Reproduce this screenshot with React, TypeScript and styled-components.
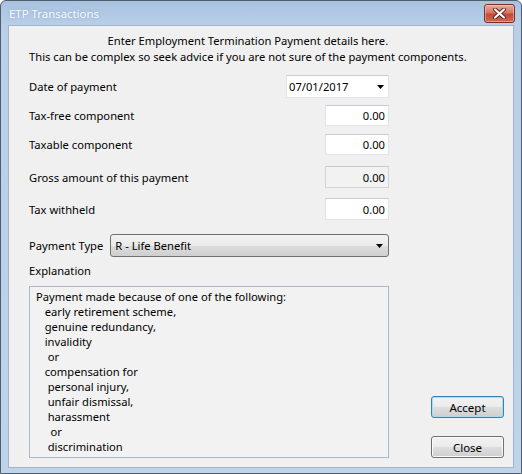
import React from 'react';
import styled, { createGlobalStyle } from 'styled-components';

const Global = createGlobalStyle`
  html, body { margin: 0; padding: 0; background: #ffffff; }
  body { font-family: "Noto Sans", "Open Sans", sans-serif; font-size: 11.2px; color: #000; }
  * { box-sizing: border-box; }
`;

const Window = styled.div`
  width: 522px;
  height: 474px;
  display: flex;
  flex-direction: column;
  border: 1px solid #4f5d6c;
  border-radius: 6px 6px 0 0;
  background: linear-gradient(#a8c2e0 0, #b9cfe8 24px, #bfd3ea 100%);
  padding: 0 7px 5px 7px;
`;

const TitleBar = styled.div`
  height: 24px;
  display: flex;
  align-items: flex-start;
  justify-content: space-between;
`;

const Title = styled.div`
  margin: 5px 0 0 1px;
  font-size: 11.4px;
  line-height: 15px;
  color: #f7faff;
  text-shadow: 0 0 3px rgba(120, 150, 190, 0.6);
`;

const CloseButton = styled.div`
  margin: 3px -1px 0 0;
  width: 31px;
  height: 19px;
  border: 1px solid #7a2f27;
  border-radius: 3px;
  background: linear-gradient(#e9a99b 0%, #d47664 45%, #c14a35 55%, #cf6a4f 100%);
  box-shadow: inset 0 0 0 1px rgba(255, 220, 210, 0.45);
  display: flex;
  align-items: center;
  justify-content: center;
`;

const Client = styled.div`
  flex: 1;
  display: flex;
  flex-direction: column;
  background: #f0f0f0;
  border: 1px solid #a3b4c8;
  padding: 7px 9px 8px 20px;
`;

const Intro = styled.div`
  align-self: flex-start;
  display: flex;
  flex-direction: column;
  align-items: center;
`;

const IntroLine = styled.div`
  line-height: 16px;
  white-space: nowrap;
`;

const Main = styled.div`
  flex: 1;
  display: flex;
`;

const FormColumn = styled.div`
  width: 360px;
  display: flex;
  flex-direction: column;
`;

const Row = styled.div<{ $mt: number; $h: number }>`
  margin-top: ${p => p.$mt}px;
  height: ${p => p.$h}px;
  display: flex;
  align-items: center;
  justify-content: space-between;
`;

const Label = styled.span`
  line-height: 15px;
  white-space: nowrap;
`;

const NumberBox = styled.div<{ $disabled?: boolean }>`
  width: 64px;
  height: 100%;
  display: flex;
  align-items: center;
  justify-content: flex-end;
  padding-right: 3px;
  background: ${p => (p.$disabled ? '#f2f2f2' : '#ffffff')};
  border: 1px solid ${p => (p.$disabled ? '#d4d4d4' : '#e1e4e9')};
  border-top-color: ${p => (p.$disabled ? '#c9c9c9' : '#c6cad1')};
  color: #000;
`;

const DateBox = styled.div`
  width: 103px;
  height: 100%;
  display: flex;
  align-items: center;
  justify-content: space-between;
  padding: 0 4px 0 2px;
  background: #ffffff;
  border: 1px solid #e1e4e9;
  border-top-color: #c6cad1;
`;

const Combo = styled.div`
  margin-left: 7px;
  flex: 1;
  height: 100%;
  display: flex;
  align-items: center;
  justify-content: space-between;
  padding: 0 5px 0 4px;
  border: 1px solid #707070;
  border-radius: 3px;
  background: linear-gradient(#f2f2f2 0%, #ebebeb 50%, #dddddd 51%, #cfcfcf 100%);
`;

const ExplanationBox = styled.div`
  margin-top: 8px;
  height: 172px;
  border: 1px solid #abb9c8;
  background: #f2f2f2;
  padding: 2px 6px;
  line-height: 15px;
  white-space: pre;
`;

const ButtonColumn = styled.div`
  flex: 1;
  display: flex;
  flex-direction: column;
  align-items: flex-end;
  justify-content: flex-end;
  gap: 18px;
  padding-bottom: 1px;
`;

const Button = styled.div<{ $default?: boolean }>`
  width: 73px;
  height: 22px;
  display: flex;
  align-items: center;
  justify-content: center;
  font-size: 11.5px;
  border: 1px solid ${p => (p.$default ? '#3c7fb1' : '#707070')};
  border-radius: 3px;
  background: linear-gradient(#f2f2f2 0%, #ebebeb 50%, #dddddd 51%, #cfcfcf 100%);
  box-shadow: ${p => (p.$default ? 'inset 0 0 0 1px #a8dcf5' : 'inset 0 0 0 1px #fbfbfb')};
`;

const Arrow = () => (
  <svg width="7" height="4" viewBox="0 0 7 4">
    <path d="M0 0 H7 L3.5 4 Z" fill="#000" />
  </svg>
);

const CloseIcon = () => (
  <svg width="13" height="11" viewBox="0 0 13 11">
    <path
      d="M2 1.5 L11 9.5 M11 1.5 L2 9.5"
      stroke="#5b241c"
      strokeWidth="4"
      strokeLinecap="round"
    />
    <path d="M2 1.5 L11 9.5 M11 1.5 L2 9.5" stroke="#ffffff" strokeWidth="2.2" strokeLinecap="round" />
  </svg>
);

const explanation = [
  'Payment made because of one of the following:',
  '   early retirement scheme,',
  '   genuine redundancy,',
  '   invalidity',
  '    or',
  '   compensation for',
  '    personal injury,',
  '    unfair dismissal,',
  '    harassment',
  '     or',
  '    discrimination',
].join('\n');

export default function App() {
  return (
    <>
      <Global />
      <Window>
        <TitleBar>
          <Title>ETP Transactions</Title>
          <CloseButton>
            <CloseIcon />
          </CloseButton>
        </TitleBar>
        <Client>
          <Intro>
            <IntroLine>Enter Employment Termination Payment details here.</IntroLine>
            <IntroLine>This can be complex so seek advice if you are not sure of the payment components.</IntroLine>
          </Intro>
          <Main>
            <FormColumn>
              <Row $mt={10} $h={23}>
                <Label>Date of payment</Label>
                <DateBox>
                  <span>07/01/2017</span>
                  <Arrow />
                </DateBox>
              </Row>
              <Row $mt={7} $h={21}>
                <Label>Tax-free component</Label>
                <NumberBox>0.00</NumberBox>
              </Row>
              <Row $mt={8} $h={21}>
                <Label>Taxable component</Label>
                <NumberBox>0.00</NumberBox>
              </Row>
              <Row $mt={11} $h={22}>
                <Label>Gross amount of this payment</Label>
                <NumberBox $disabled>0.00</NumberBox>
              </Row>
              <Row $mt={10} $h={22}>
                <Label>Tax withheld</Label>
                <NumberBox>0.00</NumberBox>
              </Row>
              <Row $mt={14} $h={23}>
                <Label>Payment Type</Label>
                <Combo>
                  <span>R - Life Benefit</span>
                  <Arrow />
                </Combo>
              </Row>
              <Row $mt={6} $h={15}>
                <Label>Explanation</Label>
              </Row>
              <ExplanationBox>{explanation}</ExplanationBox>
            </FormColumn>
            <ButtonColumn>
              <Button $default>Accept</Button>
              <Button>Close</Button>
            </ButtonColumn>
          </Main>
        </Client>
      </Window>
    </>
  );
}
